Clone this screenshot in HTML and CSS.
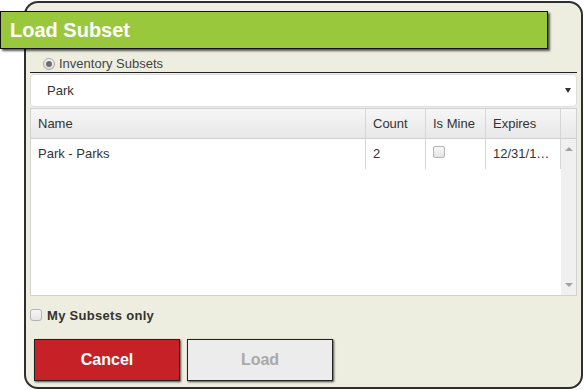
FILE: index.html
```html
<!DOCTYPE html>
<html>
<head>
<meta charset="utf-8">
<link rel="stylesheet" href="styles.css">
</head>
<body>
<div class="panel">
  <div class="title">Load Subset</div>
  <div class="radio-row">
    <span class="radio"><span class="dot"></span></span>
    <span class="radio-label">Inventory Subsets</span>
  </div>
  <div class="select">
    <span class="select-text">Park</span>
    <span class="caret"></span>
  </div>
  <div class="grid">
    <div class="grid-head">
      <div class="cell c-name">Name</div>
      <div class="cell c-count">Count</div>
      <div class="cell c-mine">Is Mine</div>
      <div class="cell c-exp">Expires</div>
      <div class="cell c-sb"></div>
    </div>
    <div class="grid-body">
      <div class="rows">
        <div class="row">
          <div class="cell c-name">Park - Parks</div>
          <div class="cell c-count">2</div>
          <div class="cell c-mine"><span class="cbox"></span></div>
          <div class="cell c-exp">12/31/1…</div>
        </div>
      </div>
      <div class="scrollbar">
        <span class="arrow-up"></span>
        <span class="arrow-down"></span>
      </div>
    </div>
  </div>
  <div class="check-row">
    <span class="cbox big"></span>
    <span class="check-label">My Subsets only</span>
  </div>
  <div class="buttons">
    <div class="btn btn-cancel">Cancel</div>
    <div class="btn btn-load">Load</div>
  </div>
</div>
</body>
</html>
```

FILE: styles.css
```css
html, body {
  margin: 0;
  background: #ffffff;
}
body {
  padding: 1px 0 0 24px;
  font-family: "Liberation Sans", Arial, sans-serif;
  color: #333;
}
.panel {
  box-sizing: border-box;
  width: 559px;
  height: 388px;
  background: #eeeee0;
  border: 2px solid #2e2e2e;
  border-radius: 14px;
  padding: 0 4px;
  display: flex;
  flex-direction: column;
}
.title {
  box-sizing: border-box;
  margin: 8px 0 0 -30px;
  width: 548px;
  height: 38px;
  background: #9ac83c;
  border: 1px solid #111;
  box-shadow: 2px 2px 2px rgba(0, 0, 0, 0.65);
  color: #fff;
  font-weight: bold;
  font-size: 20px;
  line-height: 36px;
  padding-left: 9px;
}
.radio-row {
  box-sizing: border-box;
  height: 24px;
  padding: 6px 0 0 13px;
  border-bottom: 1px solid #222;
  display: flex;
  align-items: center;
  font-size: 13px;
}
.radio {
  box-sizing: border-box;
  width: 12px;
  height: 12px;
  border-radius: 50%;
  border: 1px solid #a8a8a8;
  background: linear-gradient(#f4f4f4, #dcdcdc);
  display: flex;
  align-items: center;
  justify-content: center;
  margin-right: 4px;
}
.dot {
  width: 6px;
  height: 6px;
  border-radius: 50%;
  background: #6e6e6e;
}
.radio-label {
  color: #444;
  line-height: 17px;
}
.select {
  box-sizing: border-box;
  margin-top: 1px;
  height: 33px;
  background: #fff;
  border: 1px solid #dedede;
  border-radius: 4px;
  display: flex;
  align-items: center;
  justify-content: space-between;
  padding: 0 5px 0 16px;
  font-size: 13px;
  color: #333;
}
.caret {
  width: 0;
  height: 0;
  border-left: 3px solid transparent;
  border-right: 3px solid transparent;
  border-top: 5px solid #333;
}
.grid {
  box-sizing: border-box;
  margin-top: 1px;
  height: 188px;
  background: #fff;
  border: 1px solid #d2d2d2;
  display: flex;
  flex-direction: column;
  font-size: 13px;
}
.grid-head {
  box-sizing: border-box;
  height: 30px;
  display: flex;
  background: linear-gradient(#f6f6f6, #e8e8e8);
  border-bottom: 1px solid #d0d0d0;
}
.cell {
  box-sizing: border-box;
  border-right: 1px solid #d6d6d6;
  padding-left: 7px;
  display: flex;
  align-items: center;
  white-space: nowrap;
  overflow: hidden;
}
.c-name { width: 335px; }
.c-count { width: 60px; }
.c-mine { width: 60px; }
.c-exp { width: 75px; }
.c-sb { flex: 1; border-right: none; }
.grid-head .cell { color: #333; }
.grid-body {
  flex: 1;
  display: flex;
}
.rows {
  flex: 1;
}
.row {
  height: 30px;
  display: flex;
  color: #333;
}
.row .cell { align-items: center; padding-bottom: 1px; }
.row .c-mine { align-items: flex-start; padding-top: 7px; }
.scrollbar {
  width: 16px;
  background: #f0f0f0;
  display: flex;
  flex-direction: column;
  justify-content: space-between;
  align-items: center;
  padding: 8px 0 8px;
}
.arrow-up {
  width: 0;
  height: 0;
  border-left: 4px solid transparent;
  border-right: 4px solid transparent;
  border-bottom: 4px solid #a3a3a3;
}
.arrow-down {
  width: 0;
  height: 0;
  border-left: 4px solid transparent;
  border-right: 4px solid transparent;
  border-top: 4px solid #a3a3a3;
}
.cbox {
  box-sizing: border-box;
  display: inline-block;
  width: 12px;
  height: 12px;
  border: 1px solid #b4b4b4;
  border-radius: 2px;
  background: linear-gradient(#f7f7f7, #e4e4e4);
}
.check-row {
  margin-top: 10px;
  height: 18px;
  display: flex;
  align-items: center;
}
.cbox.big {
  width: 12px;
  height: 12px;
  border-radius: 3px;
  margin-right: 5px;
}
.check-label {
  font-size: 13px;
  font-weight: bold;
  letter-spacing: 0.3px;
  color: #333;
}
.buttons {
  margin: 15px 0 0 4px;
  display: flex;
  gap: 7px;
}
.btn {
  box-sizing: border-box;
  width: 146px;
  height: 42px;
  border: 1px solid #222;
  box-shadow: 1px 1px 2px rgba(0, 0, 0, 0.7);
  display: flex;
  align-items: center;
  justify-content: center;
  font-size: 16px;
  font-weight: bold;
}
.btn-cancel {
  background: #c62127;
  color: #fff;
}
.btn-load {
  background: #ececec;
  color: #a9a9a9;
}
```
